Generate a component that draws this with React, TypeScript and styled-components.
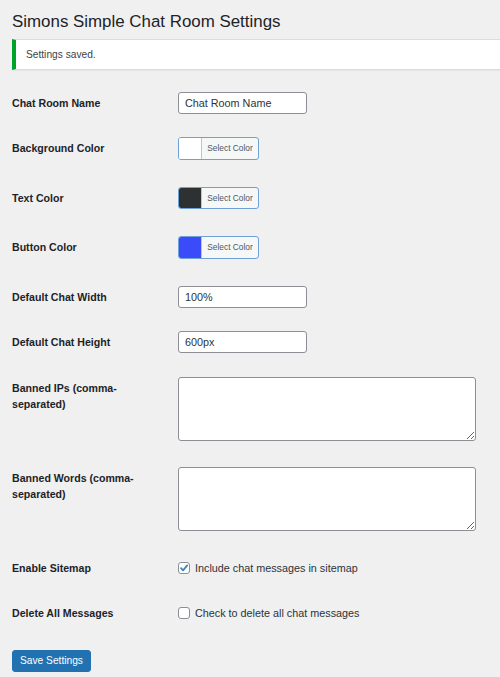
import React from 'react'
import styled, { createGlobalStyle } from 'styled-components'

const GlobalStyle = createGlobalStyle`
  html, body {
    margin: 0;
    padding: 0;
    background: #f0f0f1;
    font-family: "Liberation Sans", Arial, sans-serif;
    color: #1d2327;
  }
`

const Wrap = styled.div`
  padding: 10px 0 20px 12px;
  overflow: hidden;
`

const Title = styled.h1`
  margin: 0;
  font-size: 16.9px;
  font-weight: 400;
  line-height: 24px;
  color: #1d2327;
`

const Notice = styled.div`
  margin: 5px -20px 10px 0;
  padding: 8px 10px;
  background: #fff;
  border: 1px solid #dcdcde;
  border-left: 4px solid #00a32a;
  box-shadow: 0 1px 1px rgba(0, 0, 0, 0.04);
  font-size: 10.2px;
  line-height: 13px;
  color: #3c434a;
`

const Row = styled.div<{ $top?: boolean; $extra?: number }>`
  display: grid;
  grid-template-columns: 166px 1fr;
  align-items: ${ p => p.$top ? 'start' : 'center' };
  min-height: 22.5px;
  padding: 11.5px 0 ${ p => 11.5 + (p.$extra || 0) }px;
`

const Label = styled.div<{ $top?: boolean }>`
  padding-right: 16px;
  padding-top: ${ p => p.$top ? '3px' : '0' };
  font-size: 10.6px;
  font-weight: 700;
  line-height: 16px;
  color: #1d2327;
`

const TextInput = styled.input`
  box-sizing: border-box;
  width: 129px;
  height: 22px;
  margin: 0;
  padding: 0 6px;
  border: 1px solid #8c8f94;
  border-radius: 3px;
  background: #fff;
  font-family: inherit;
  font-size: 10.8px;
  color: #2c3338;
  outline: none;
`

const TextArea = styled.textarea`
  display: block;
  box-sizing: border-box;
  width: 298px;
  height: 64px;
  margin: 0;
  padding: 4px 6px;
  border: 1px solid #8c8f94;
  border-radius: 3px;
  background: #fff;
  font-family: inherit;
  font-size: 10.8px;
  outline: none;
`

const ColorButton = styled.div`
  box-sizing: border-box;
  display: flex;
  width: 81px;
  height: 22.5px;
  border: 1px solid #6fa0d8;
  border-radius: 3px;
  overflow: hidden;
  background: #f6f7f7;
`

const Swatch = styled.span<{ $color: string }>`
  width: 22px;
  background: ${ p => p.$color };
  border-right: 1px solid #c3c4c7;
`

const SwatchText = styled.span`
  flex: 1;
  display: flex;
  align-items: center;
  justify-content: center;
  font-size: 8.4px;
  color: #50575e;
`

const CheckLabel = styled.label`
  display: flex;
  align-items: center;
  gap: 5px;
  font-size: 10.8px;
  color: #2c3338;
`

const Box = styled.span`
  box-sizing: border-box;
  display: flex;
  align-items: center;
  justify-content: center;
  width: 12px;
  height: 12px;
  border: 1px solid #8c8f94;
  border-radius: 3px;
  background: #fff;
`

const SaveButton = styled.button`
  margin-top: 13.5px;
  width: 79px;
  height: 22px;
  padding: 0;
  border: 1px solid #2271b1;
  border-radius: 3px;
  background: #2271b1;
  color: #fff;
  font-family: inherit;
  font-size: 10.2px;
  cursor: pointer;
`

const colors = [
  { label: 'Background Color', color: '#ffffff' },
  { label: 'Text Color', color: '#2d3131' },
  { label: 'Button Color', color: '#3c4bfa' },
]

const Checkbox = ({ checked }: { checked?: boolean }) => (
  <Box>
    { checked && (
      <svg width='10' height='10' viewBox='0 0 10 10'>
        <path d='M2 5.2 L4.1 7.4 L8.2 2.4' fill='none' stroke='#3582c4' strokeWidth='1.7' strokeLinecap='round' strokeLinejoin='round' />
      </svg>
    ) }
  </Box>
)

const App = () => (
  <Wrap>
    <GlobalStyle />
    <Title>Simons Simple Chat Room Settings</Title>
    <Notice>Settings saved.</Notice>

    <Row>
      <Label>Chat Room Name</Label>
      <div><TextInput defaultValue='Chat Room Name' /></div>
    </Row>

    { colors.map(c => (
      <Row key={ c.label } $extra={ 4 }>
        <Label>{ c.label }</Label>
        <ColorButton>
          <Swatch $color={ c.color } />
          <SwatchText>Select Color</SwatchText>
        </ColorButton>
      </Row>
    )) }

    <Row>
      <Label>Default Chat Width</Label>
      <div><TextInput defaultValue='100%' /></div>
    </Row>
    <Row>
      <Label>Default Chat Height</Label>
      <div><TextInput defaultValue='600px' /></div>
    </Row>

    <Row $top $extra={ 3.5 }>
      <Label $top>Banned IPs (comma-separated)</Label>
      <TextArea />
    </Row>
    <Row $top $extra={ 2.5 }>
      <Label $top>Banned Words (comma-separated)</Label>
      <TextArea />
    </Row>

    <Row>
      <Label>Enable Sitemap</Label>
      <CheckLabel><Checkbox checked />Include chat messages in sitemap</CheckLabel>
    </Row>
    <Row>
      <Label>Delete All Messages</Label>
      <CheckLabel><Checkbox />Check to delete all chat messages</CheckLabel>
    </Row>

    <SaveButton>Save Settings</SaveButton>
  </Wrap>
)

export default App
